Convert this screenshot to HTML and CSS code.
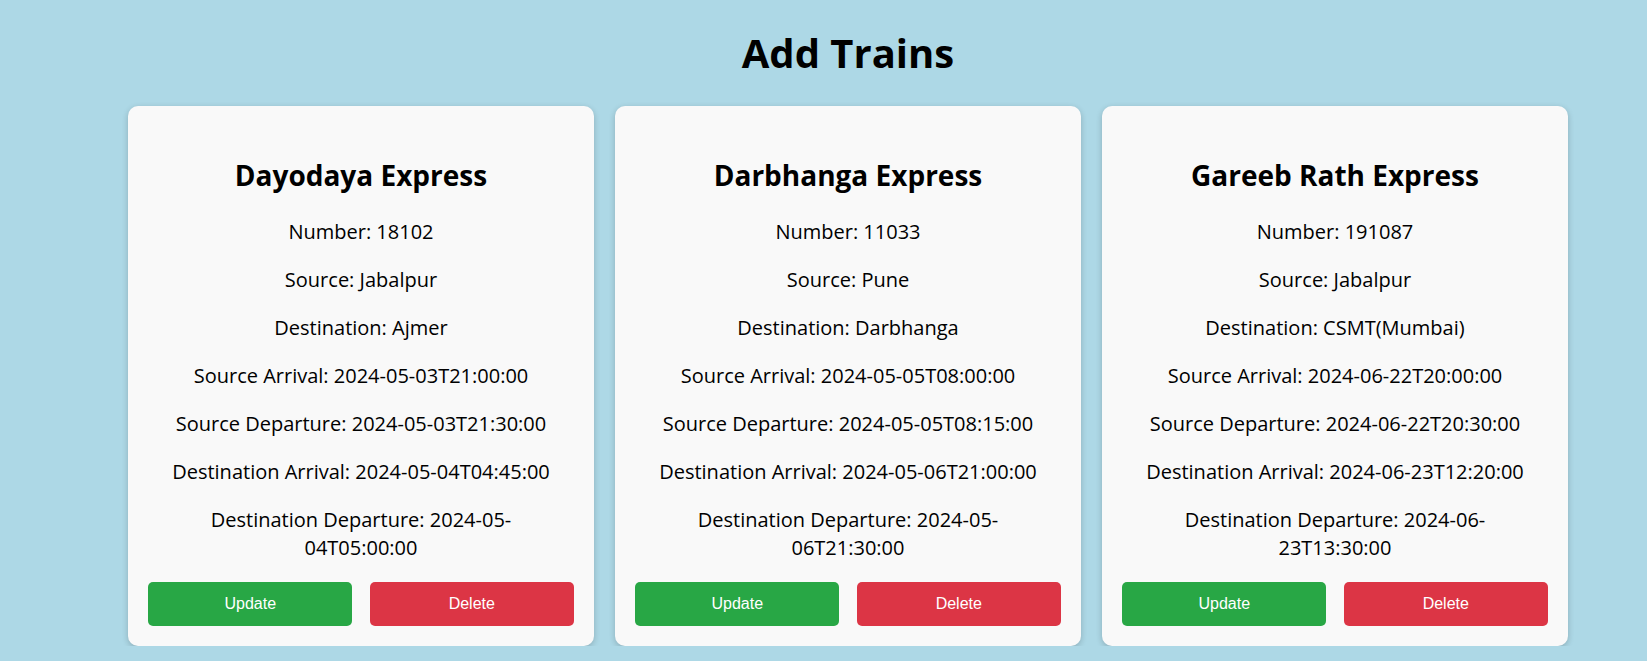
FILE: index.html
```html
<!DOCTYPE html>
<html lang="en">
<head>
<meta charset="utf-8">
<title>Add Trains</title>
<link rel="stylesheet" href="styles.css">
</head>
<body>
<div class="page">
  <h1 class="title">Add Trains</h1>
  <div class="cards">
    <div class="card">
      <h2 class="card-title">Dayodaya Express</h2>
      <p class="field">Number: 18102</p>
      <p class="field">Source: Jabalpur</p>
      <p class="field">Destination: Ajmer</p>
      <p class="field">Source Arrival: 2024-05-03T21:00:00</p>
      <p class="field">Source Departure: 2024-05-03T21:30:00</p>
      <p class="field">Destination Arrival: 2024-05-04T04:45:00</p>
      <p class="field">Destination Departure: 2024-05-04T05:00:00</p>
      <div class="actions">
        <button class="btn btn-update">Update</button>
        <button class="btn btn-delete">Delete</button>
      </div>
    </div>
    <div class="card">
      <h2 class="card-title">Darbhanga Express</h2>
      <p class="field">Number: 11033</p>
      <p class="field">Source: Pune</p>
      <p class="field">Destination: Darbhanga</p>
      <p class="field">Source Arrival: 2024-05-05T08:00:00</p>
      <p class="field">Source Departure: 2024-05-05T08:15:00</p>
      <p class="field">Destination Arrival: 2024-05-06T21:00:00</p>
      <p class="field">Destination Departure: 2024-05-06T21:30:00</p>
      <div class="actions">
        <button class="btn btn-update">Update</button>
        <button class="btn btn-delete">Delete</button>
      </div>
    </div>
    <div class="card">
      <h2 class="card-title">Gareeb Rath Express</h2>
      <p class="field">Number: 191087</p>
      <p class="field">Source: Jabalpur</p>
      <p class="field">Destination: CSMT(Mumbai)</p>
      <p class="field">Source Arrival: 2024-06-22T20:00:00</p>
      <p class="field">Source Departure: 2024-06-22T20:30:00</p>
      <p class="field">Destination Arrival: 2024-06-23T12:20:00</p>
      <p class="field">Destination Departure: 2024-06-23T13:30:00</p>
      <div class="actions">
        <button class="btn btn-update">Update</button>
        <button class="btn btn-delete">Delete</button>
      </div>
    </div>
  </div>
</div>
</body>
</html>
```

FILE: styles.css
```css
html, body {
  margin: 0;
  padding: 0;
  background: #add8e6;
  overflow: hidden;
}

body {
  font-family: "Comic Sans MS", "Open Sans", sans-serif;
  color: #000;
}

.page {
  width: 1440px;
  padding-left: 128px;
}

.title {
  margin: 25px 0 25px;
  font-size: 40px;
  line-height: 56px;
  font-weight: 700;
  text-align: center;
}

.cards {
  display: flex;
  gap: 21px;
}

.card {
  box-sizing: border-box;
  width: 466px;
  padding: 20px;
  background: #f9f9f9;
  border-radius: 10px;
  box-shadow: 0 2px 6px rgba(0, 0, 0, 0.2);
  text-align: center;
}

.card-title {
  margin: 30px 0 24px;
  font-size: 28px;
  line-height: 38px;
  font-weight: 700;
}

.field {
  margin: 20px 0;
  padding: 0 10px;
  font-size: 20px;
  line-height: 28px;
}

.actions {
  display: flex;
  justify-content: space-between;
  margin-top: 18px;
}

.btn {
  width: 48%;
  height: 44px;
  border: none;
  border-radius: 5px;
  color: #fff;
  font-family: "Liberation Sans", Arial, sans-serif;
  font-size: 16px;
}

.btn-update {
  background: #28a745;
}

.btn-delete {
  background: #dc3545;
}
```
